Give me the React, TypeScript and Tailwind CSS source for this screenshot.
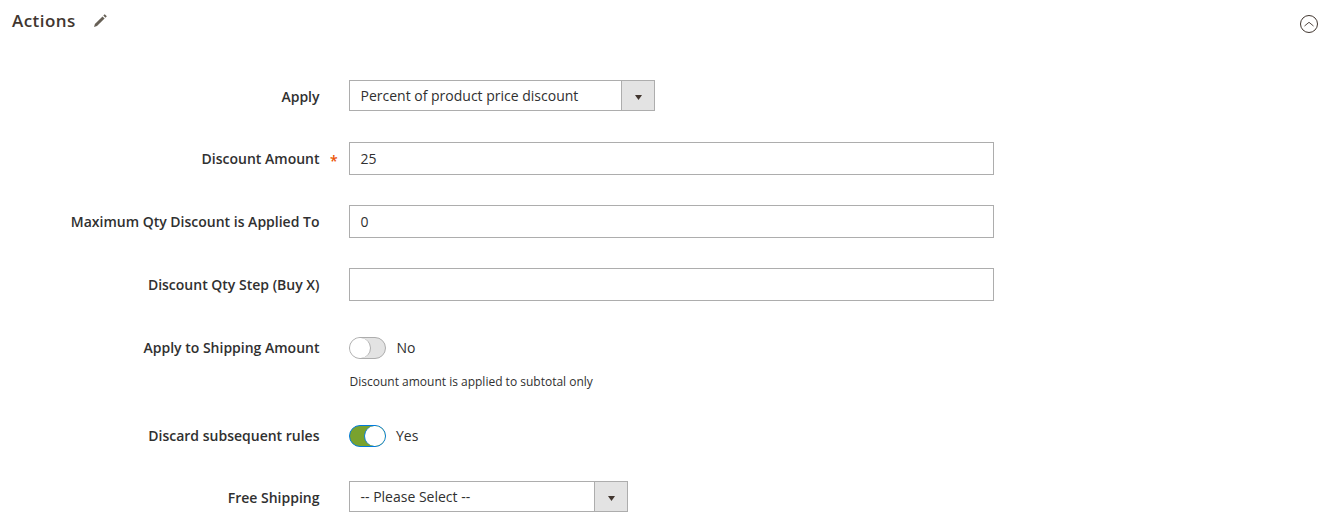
import React from "react";

const Caret = () => (
  <svg width="7" height="5" viewBox="0 0 7 5" className="mt-[3px] block"><path d="M0 0h7L3.5 5z" fill="#41362f" /></svg>
);

function Label({ children, required, low }: { children: React.ReactNode; required?: boolean; low?: boolean }) {
  return (
    <div className={`relative w-[319.5px] shrink-0 text-right text-[14px] font-semibold leading-[20px] text-[#303030] ${low ? "pt-[2px]" : ""}`}>
      {children}
      {required && <span className="absolute left-[330px] top-[2px] text-[14px] font-semibold text-[#eb5202]">*</span>}
    </div>
  );
}

function Select({ value, width }: { value: string; width: string }) {
  return (
    <div className={`${width} flex h-[31px] border border-[#adadad] bg-white`}>
      <div className="flex-1 pl-[10.5px] text-[14px] leading-[29px] text-[#303030]">{value}</div>
      <div className="flex w-[33px] items-center justify-center border-l border-[#adadad] bg-[#e3e3e3]"><Caret /></div>
    </div>
  );
}

function Input({ value }: { value?: string }) {
  return (
    <div className="h-[33px] w-[645px] border border-[#adadad] bg-white pl-[10.5px] text-[14px] leading-[31px] text-[#303030]">{value}</div>
  );
}

function Toggle({ on }: { on?: boolean }) {
  return (
    <div className="flex items-center">
      <div className={`flex h-[22px] w-[37px] rounded-full border ${on ? "justify-end border-[#007bdb] bg-[#79a22e]" : "border-[#adadad] bg-[#e3e3e3]"}`}>
        <div className={`h-[20px] w-[21px] rounded-full bg-white ${on ? "border-l border-[#007bdb]" : "border-r border-[#adadad]"}`} />
      </div>
      <span className={`text-[14px] leading-[20px] text-[#303030] ${on ? "ml-[10px]" : "ml-[10.5px]"}`}>{on ? "Yes" : "No"}</span>
    </div>
  );
}

function Row({ label, required, low, className, children }: { label: string; required?: boolean; low?: boolean; className: string; children: React.ReactNode }) {
  return (
    <div className={`flex items-center gap-[29.5px] ${className}`}>
      <Label required={required} low={low}>{label}</Label>
      {children}
    </div>
  );
}

export default function App() {
  return (
    <div className="h-[526px] w-[1328px] overflow-hidden bg-white font-['Open_Sans',sans-serif] text-[#303030]">
      <div className="flex h-[80px] items-start justify-between pl-[12px] pr-[10px] pt-[9px]">
        <div className="flex items-center gap-[17px]">
          <span className="text-[17px] font-[550] leading-[24px] tracking-[0.45px] text-[#41362f]">Actions</span>
          <svg width="15" height="15" viewBox="0 0 15 15" className="mt-[-2px]">
            <path d="M1 14l.9-3 7.6-7.6 2.1 2.1-7.6 7.6z" fill="#676056" />
            <path d="M10.3 2.6l1.4-1.4 2.1 2.1-1.4 1.4z" fill="#676056" />
          </svg>
        </div>
        <svg width="18" height="18" viewBox="0 0 18 18" className="mt-[6px]">
          <circle cx="9" cy="9" r="8.5" fill="none" stroke="#41362f" strokeWidth="1" />
          <path d="M4.5 11L9 7.3l4.5 3.7" fill="none" stroke="#41362f" strokeWidth="0.9" />
        </svg>
      </div>
      <Row label="Apply" low className="h-[31px]"><Select value="Percent of product price discount" width="w-[306px]" /></Row>
      <Row label="Discount Amount" required className="mt-[31px] h-[33px]"><Input value="25" /></Row>
      <Row label="Maximum Qty Discount is Applied To" className="mt-[30px] h-[33px]"><Input value="0" /></Row>
      <Row label="Discount Qty Step (Buy X)" className="mt-[30px] h-[33px]"><Input /></Row>
      <Row label="Apply to Shipping Amount" className="mt-[36px] h-[22px]"><Toggle /></Row>
      <div className="ml-[349.5px] mt-[14px] text-[12px] leading-[18px] text-[#303030]">Discount amount is applied to subtotal only</div>
      <Row label="Discard subsequent rules" className="mt-[34px] h-[22px]"><Toggle on /></Row>
      <Row label="Free Shipping" low className="mt-[34px] h-[31px]"><Select value="-- Please Select --" width="w-[279px]" /></Row>
    </div>
  );
}
